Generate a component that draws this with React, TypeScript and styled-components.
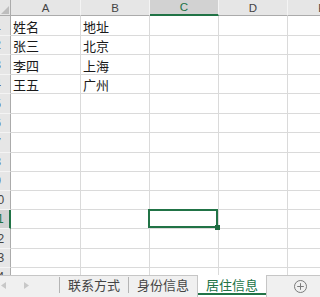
import React from 'react';
import styled, { createGlobalStyle, css } from 'styled-components';

const GlobalStyle = createGlobalStyle`
  html, body { margin: 0; padding: 0; background: #fff; }
  body { width: 320px; height: 297px; overflow: hidden; }
  #root { width: 320px; height: 297px; }
  * { box-sizing: border-box; }
`;

const GREEN = '#217346';
const CJK = `"Noto Sans CJK SC", "Noto Sans", sans-serif`;
const LATIN = `"Liberation Sans", Arial, sans-serif`;

const COLS = [
  { key: 'A', width: 70 },
  { key: 'B', width: 69 },
  { key: 'C', width: 69 },
  { key: 'D', width: 69 },
  { key: 'E', width: 69 },
];

const ROW_HEIGHTS = [20, 19, 20, 19, 20, 19, 20, 19, 19, 19, 19, 20, 19, 19];

const DATA: Record<number, string[]> = {
  1: ['姓名', '地址'],
  2: ['张三', '北京'],
  3: ['李四', '上海'],
  4: ['王五', '广州'],
};

const SEL_ROW = 11;
const SEL_COL = 'C';

const Window = styled.div`
  width: 320px;
  height: 297px;
  display: flex;
  flex-direction: column;
  background: #fff;
  overflow: hidden;
`;

const Sheet = styled.div`
  flex: 1;
  min-height: 0;
  overflow: hidden;
  display: flex;
  flex-direction: column;
`;

const Row = styled.div<{ $h: number }>`
  display: flex;
  flex: 0 0 ${(p) => p.$h}px;
  height: ${(p) => p.$h}px;
`;

const Corner = styled.div`
  flex: 0 0 11px;
  background: #e6e6e6;
  border-right: 1px solid #ababab;
  border-bottom: 1px solid #ababab;
  display: flex;
  align-items: flex-end;
  justify-content: flex-end;
  svg { display: block; }
`;

const ColHead = styled.div<{ $w: number; $sel?: boolean }>`
  flex: 0 0 ${(p) => p.$w}px;
  display: flex;
  align-items: center;
  justify-content: center;
  background: #e6e6e6;
  border-right: 1px solid #f4f4f4;
  border-bottom: 1px solid #ababab;
  font-family: ${LATIN};
  font-size: 11.5px;
  color: #444;
  ${(p) =>
    p.$sel &&
    css`
      background: #d2d2d2;
      color: ${GREEN};
      border-bottom: 2px solid ${GREEN};
    `}
`;

const RowHead = styled.div<{ $sel?: boolean }>`
  flex: 0 0 11px;
  display: flex;
  align-items: center;
  justify-content: flex-end;
  overflow: hidden;
  background: #e6e6e6;
  border-right: 1px solid #ababab;
  border-bottom: 1px solid #f4f4f4;
  color: #444;
  ${(p) =>
    p.$sel &&
    css`
      background: #d2d2d2;
      color: ${GREEN};
      border-right: 2px solid ${GREEN};
    `}
`;

const RowNum = styled.span<{ $sel?: boolean }>`
  flex: 0 0 25px;
  margin-right: ${(p) => (p.$sel ? -1 : 0)}px;
  text-align: center;
  font-family: ${LATIN};
  font-size: 12px;
  line-height: 1;
`;

const Cell = styled.div<{ $w: number }>`
  position: relative;
  flex: 0 0 ${(p) => p.$w}px;
  display: flex;
  align-items: center;
  padding-left: 2px;
  padding-top: 1px;
  border-right: 1px solid #dadada;
  border-bottom: 1px solid #dadada;
  font-family: ${CJK};
  font-size: 13px;
  line-height: 1;
  color: #1a1a1a;
  white-space: nowrap;
`;

const Selection = styled.div`
  position: absolute;
  left: -2px;
  top: -1px;
  right: 0;
  bottom: 0;
  border: 2px solid ${GREEN};
  z-index: 2;
  pointer-events: none;
`;

const FillHandle = styled.div`
  position: absolute;
  right: -4px;
  bottom: -4px;
  width: 5px;
  height: 5px;
  background: #1e6b40;
`;

const TabBar = styled.div`
  flex: 0 0 22px;
  height: 22px;
  display: flex;
  align-items: stretch;
  background: #f0f0f0;
  border-top: 1px solid #c6c6c6;
`;

const Nav = styled.div`
  flex: 0 0 59px;
  display: flex;
  align-items: center;
  gap: 18px;
  padding: 0 0 3px 1px;
  svg { display: block; }
`;

const Sep = styled.div`
  flex: 0 0 1px;
  margin: 1px 0 4px;
  background: #b4b4b4;
`;

const Tab = styled.div<{ $active?: boolean }>`
  flex: 0 0 auto;
  display: flex;
  align-items: center;
  padding: 0 8px 4px;
  font-family: ${CJK};
  font-size: 13px;
  line-height: 1;
  color: #444;
  white-space: nowrap;
  ${(p) =>
    p.$active &&
    css`
      margin-top: -1px;
      padding-top: 1px;
      color: ${GREEN};
      border-left: 1px solid #c6c6c6;
      border-right: 1px solid #c6c6c6;
      background: linear-gradient(${GREEN}, ${GREEN}) no-repeat 0 calc(100% - 2px) / 100% 2px, #fff;
    `}
`;

const AddArea = styled.div`
  flex: 1;
  display: flex;
  align-items: center;
  padding-left: 27px;
  svg { display: block; }
`;

const LeftArrow = () => (
  <svg width="5" height="7" viewBox="0 0 5 7">
    <polygon points="5,0 5,7 0,3.5" fill="#c8c8c8" />
  </svg>
);

const RightArrow = () => (
  <svg width="5" height="7" viewBox="0 0 5 7">
    <polygon points="0,0 0,7 5,3.5" fill="#c8c8c8" />
  </svg>
);

const AddIcon = () => (
  <svg width="13" height="13" viewBox="0 0 13 13">
    <circle cx="6.5" cy="6.5" r="6" fill="none" stroke="#7a7a7a" strokeWidth="1" />
    <path d="M6.5 3.2v6.6M3.2 6.5h6.6" stroke="#7a7a7a" strokeWidth="1" />
  </svg>
);

export default function App() {
  return (
    <>
      <GlobalStyle />
      <Window>
        <Sheet>
          <Row $h={16}>
            <Corner>
              <svg width="10" height="15" viewBox="0 0 10 15">
                <polygon points="9,6 9,14 1,14" fill="#bdbdbd" />
              </svg>
            </Corner>
            {COLS.map((c) => (
              <ColHead key={c.key} $w={c.width} $sel={c.key === SEL_COL}>
                {c.key}
              </ColHead>
            ))}
          </Row>
          {ROW_HEIGHTS.map((h, i) => {
            const r = i + 1;
            const vals = DATA[r] || [];
            const sel = r === SEL_ROW;
            return (
              <Row key={r} $h={h}>
                <RowHead $sel={sel}>
                  <RowNum $sel={sel}>{r}</RowNum>
                </RowHead>
                {COLS.map((c, ci) => (
                  <Cell key={c.key} $w={c.width}>
                    {vals[ci] || ''}
                    {sel && c.key === SEL_COL && (
                      <Selection>
                        <FillHandle />
                      </Selection>
                    )}
                  </Cell>
                ))}
              </Row>
            );
          })}
        </Sheet>
        <TabBar>
          <Nav>
            <LeftArrow />
            <RightArrow />
          </Nav>
          <Sep />
          <Tab>联系方式</Tab>
          <Sep />
          <Tab>身份信息</Tab>
          <Tab $active>居住信息</Tab>
          <AddArea>
            <AddIcon />
          </AddArea>
        </TabBar>
      </Window>
    </>
  );
}
